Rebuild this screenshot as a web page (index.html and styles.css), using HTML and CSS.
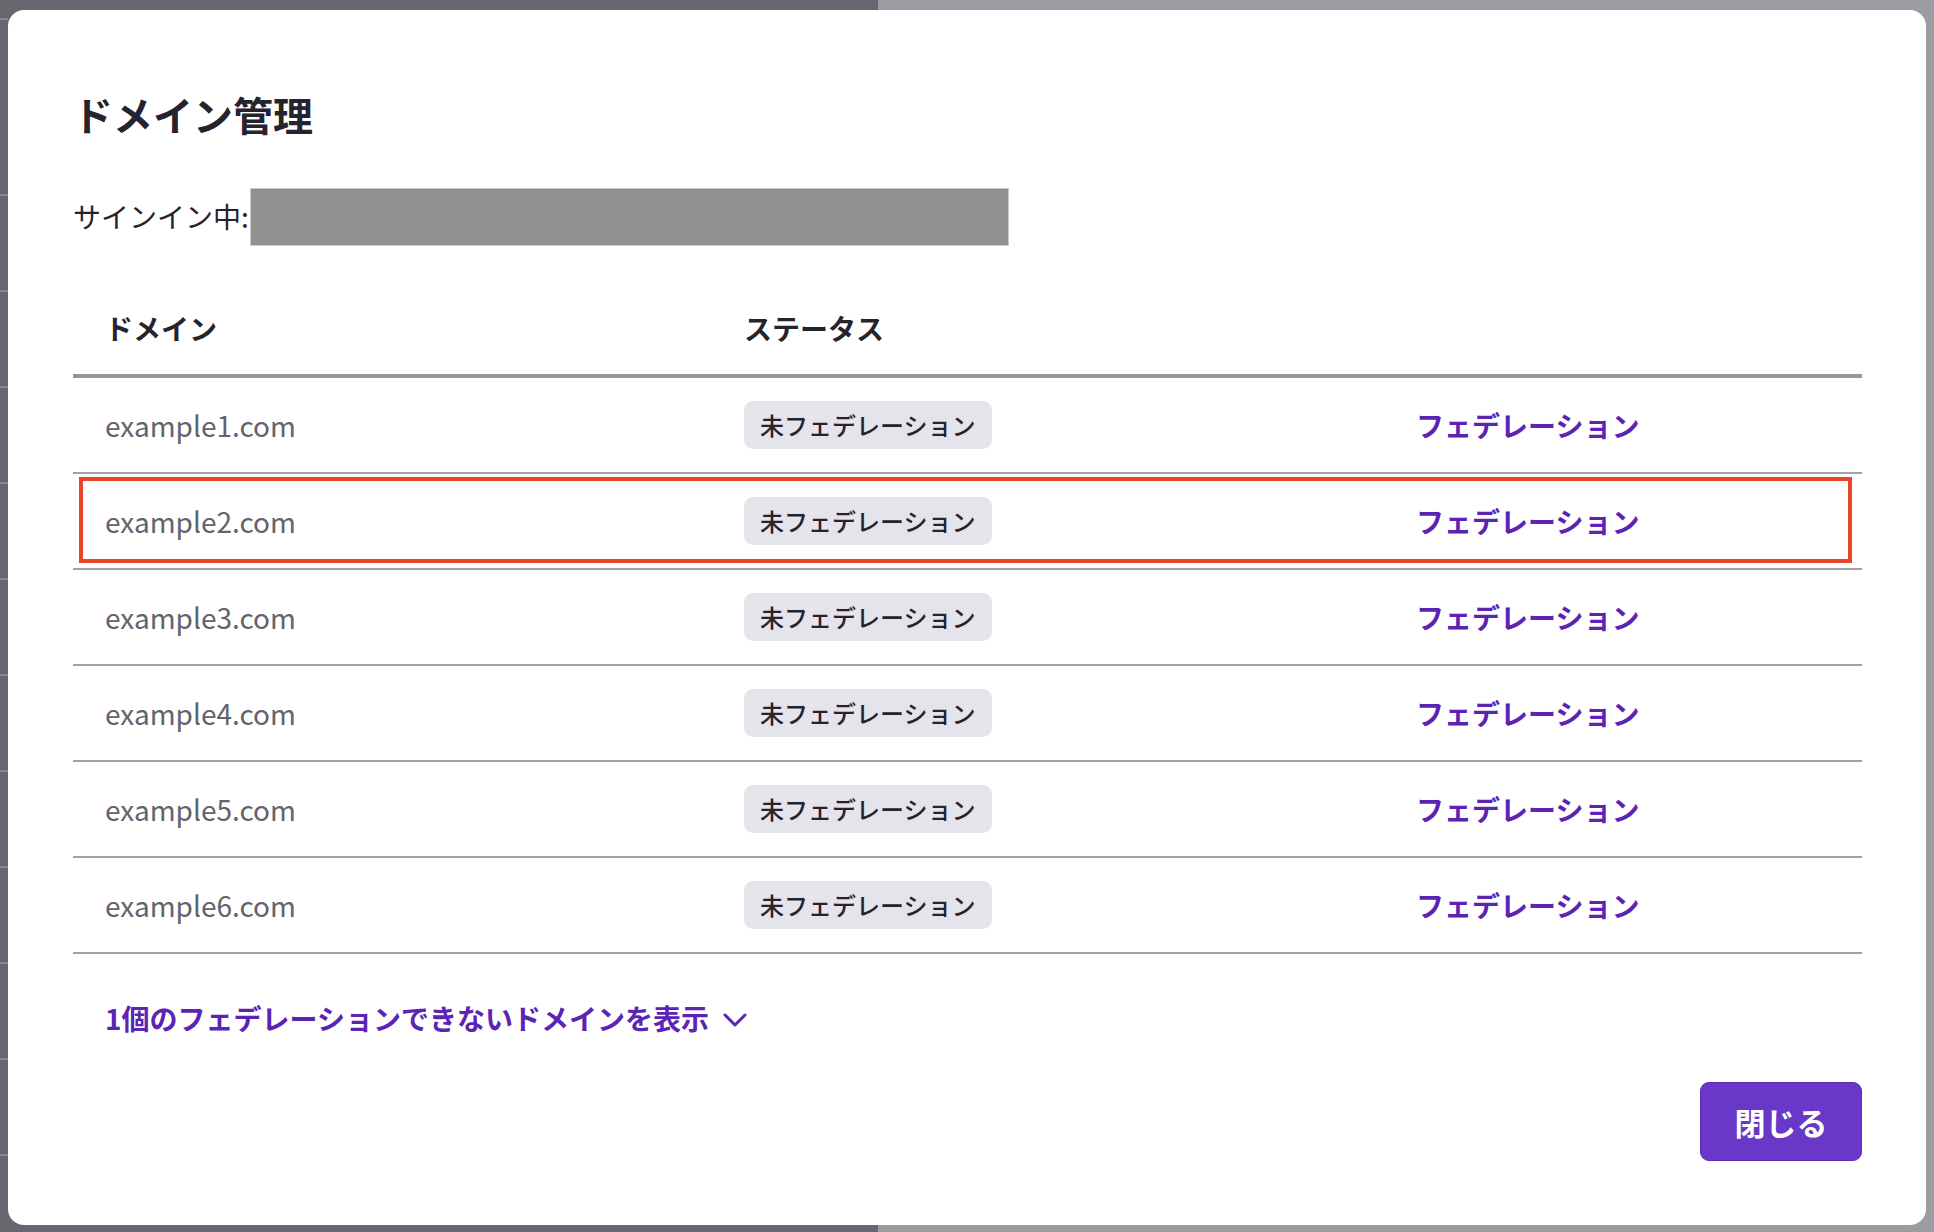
FILE: index.html
```html
<!DOCTYPE html>
<html lang="ja">

<head>
    <meta charset="UTF-8">
    <meta name="viewport" content="width=device-width, initial-scale=1.0">
    <title>ドメイン管理</title>
    <link rel="stylesheet" href="styles.css">
</head>

<body>

    <div class="backdrop-edge"></div>

    <!-- Domain dialog -->
    <div class="modal">
        <h1 class="modal-title">ドメイン管理</h1>

        <div class="signed-in">
            <span>サインイン中:</span>
            <span class="redacted"></span>
        </div>

        <div class="domain-table">
            <div class="table-row table-head">
                <div class="cell">ドメイン</div>
                <div class="cell">ステータス</div>
                <div class="cell"></div>
            </div>

            <div class="table-row">
                <div class="cell domain">example1.com</div>
                <div class="cell"><span class="badge">未フェデレーション</span></div>
                <div class="cell"><a class="action-link" href="#">フェデレーション</a></div>
            </div>
            <div class="table-row highlighted">
                <div class="cell domain">example2.com</div>
                <div class="cell"><span class="badge">未フェデレーション</span></div>
                <div class="cell"><a class="action-link" href="#">フェデレーション</a></div>
                <div class="highlight-box"></div>
            </div>
            <div class="table-row">
                <div class="cell domain">example3.com</div>
                <div class="cell"><span class="badge">未フェデレーション</span></div>
                <div class="cell"><a class="action-link" href="#">フェデレーション</a></div>
            </div>
            <div class="table-row">
                <div class="cell domain">example4.com</div>
                <div class="cell"><span class="badge">未フェデレーション</span></div>
                <div class="cell"><a class="action-link" href="#">フェデレーション</a></div>
            </div>
            <div class="table-row">
                <div class="cell domain">example5.com</div>
                <div class="cell"><span class="badge">未フェデレーション</span></div>
                <div class="cell"><a class="action-link" href="#">フェデレーション</a></div>
            </div>
            <div class="table-row">
                <div class="cell domain">example6.com</div>
                <div class="cell"><span class="badge">未フェデレーション</span></div>
                <div class="cell"><a class="action-link" href="#">フェデレーション</a></div>
            </div>
        </div>

        <a class="show-more" href="#">
            1個のフェデレーションできないドメインを表示
            <svg class="chevron" viewBox="0 0 24 14" width="24" height="14">
                <path d="M2 2 L12 12 L22 2" fill="none" stroke="currentColor" stroke-width="3" stroke-linecap="round" stroke-linejoin="round"/>
            </svg>
        </a>

        <div class="modal-footer">
            <button class="close-button">閉じる</button>
        </div>
    </div>

</body>

</html>
```

FILE: styles.css
```css
body {
    font-family: "Noto Sans CJK JP", "Noto Sans", sans-serif;
    margin: 0;
    padding: 10px 8px 7px 8px;
    background: linear-gradient(to right, #68666e 878px, #9d9ca2 878px);
    height: 1232px;
    box-sizing: border-box;
    position: relative;
    overflow: hidden;
}

/* faint lines of the page behind the overlay */
.backdrop-edge {
    position: absolute;
    left: 0;
    top: 0;
    width: 8px;
    height: 100%;
    background: repeating-linear-gradient(to bottom, transparent 0, transparent 94px, #8a8990 94px, #8a8990 96px);
    background-position: 0 100px;
}

/* Dialog */
.modal {
    position: relative;
    background-color: #fff;
    border-radius: 16px;
    height: 1215px;
    box-sizing: border-box;
    padding: 80px 64px 64px 65px;
    display: flex;
    flex-direction: column;
    color: #25232e;
}

.modal-title {
    margin: 0;
    font-size: 40px;
    font-weight: 700;
    line-height: 1.2;
}

.signed-in {
    display: flex;
    align-items: center;
    margin-top: 51px;
    font-size: 28px;
    line-height: 1.2;
}

.redacted {
    display: inline-block;
    width: 757px;
    height: 56px;
    background-color: #919191;
    box-shadow: 0 0 0 1px #c9c9c9;
    margin-left: 2px;
}

/* Table */
.domain-table {
    margin-top: 37px;
}

.table-row {
    position: relative;
    display: grid;
    grid-template-columns: 639px 672px 1fr;
    align-items: center;
    height: 96px;
    box-sizing: border-box;
    border-bottom: 2px solid #a3a3a3;
}

.table-head {
    height: auto;
    border-bottom: 4px solid #979797;
    font-size: 28px;
    font-weight: 700;
    line-height: 1.2;
}

.table-head .cell {
    padding-top: 30px;
    padding-bottom: 28px;
}

.cell {
    padding-left: 32px;
}

.domain {
    font-size: 28px;
    color: #64626d;
}

.badge {
    display: inline-block;
    height: 48px;
    line-height: 48px;
    padding: 0 16px;
    border-radius: 9px;
    background-color: #e5e4ea;
    font-size: 24px;
    font-weight: 500;
    color: #25232e;
}

.action-link {
    font-size: 28px;
    font-weight: 700;
    color: #5b24b5;
    text-decoration: none;
}

/* red annotation around the second row */
.highlight-box {
    position: absolute;
    top: 3px;
    left: 6px;
    right: 10px;
    bottom: 5px;
    border: 4px solid #e9442c;
}

.show-more {
    display: flex;
    align-items: center;
    margin-top: 48px;
    padding-left: 32px;
    font-size: 28px;
    font-weight: 700;
    line-height: 1.2;
    color: #5b24b5;
    text-decoration: none;
}

.chevron {
    margin-left: 14px;
    margin-top: 4px;
}

.modal-footer {
    margin-top: auto;
    display: flex;
    justify-content: flex-end;
}

.close-button {
    width: 162px;
    height: 79px;
    background-color: #6a38c8;
    color: #fff;
    border: 1px solid #5a2db0;
    border-radius: 9px;
    font-family: inherit;
    font-size: 31px;
    font-weight: 700;
    cursor: pointer;
}
```
